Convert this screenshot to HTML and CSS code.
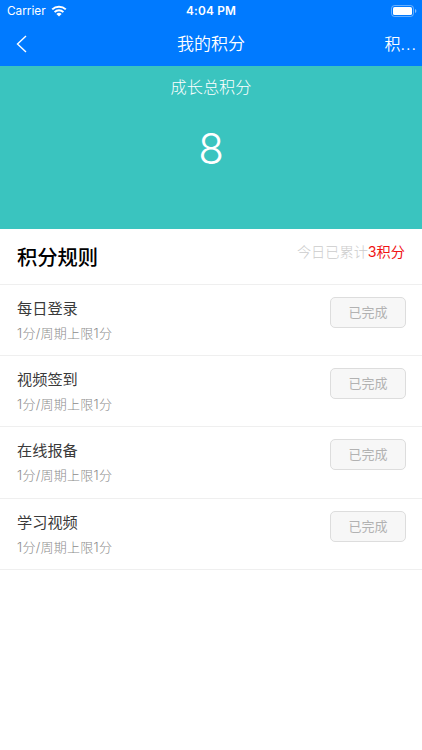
FILE: index.html
```html
<!DOCTYPE html>
<html lang="zh-CN">
<head>
    <meta charset="UTF-8">
    <meta name="viewport" content="width=device-width, initial-scale=1.0">
    <title>我的积分</title>
    <link rel="stylesheet" href="styles.css">
</head>
<body>
    <div class="status-bar">
        <div class="carrier">
            <span>Carrier</span>
            <svg class="wifi" width="16" height="12" viewBox="0 0 16 12">
                <path d="M1.2 4.4a9.8 9.8 0 0 1 13.6 0M3.6 7.1a6.3 6.3 0 0 1 8.8 0" fill="none" stroke="#fff" stroke-width="2"/>
                <path d="M8 11.6 5.4 9a3.8 3.8 0 0 1 5.2 0z" fill="#fff"/>
            </svg>
        </div>
        <div class="time">4:04 PM</div>
        <div class="battery">
            <svg width="26" height="12" viewBox="0 0 26 12">
                <rect x="0.5" y="0.5" width="22" height="11" rx="3" fill="none" stroke="#fff" stroke-opacity="0.4"/>
                <rect x="2" y="2" width="19" height="8" rx="1.6" fill="#fff"/>
                <path d="M24 4v4q1.4-.6 1.4-2T24 4z" fill="#fff" fill-opacity="0.5"/>
            </svg>
        </div>
    </div>
    <div class="nav-bar">
        <a class="back" href="#">
            <svg width="12" height="18" viewBox="0 0 12 18">
                <path d="M10 1 1.500 9l8.500 8" fill="none" stroke="#fff" stroke-width="1.4"/>
            </svg>
        </a>
        <div class="nav-title">我的积分</div>
        <div class="nav-more">积<span>...</span></div>
    </div>

    <div class="banner">
        <div class="banner-label">成长总积分</div>
        <div class="banner-score">8</div>
    </div>

    <div class="rules-header">
        <h2>积分规则</h2>
        <div class="today">今日已累计<span>3积分</span></div>
    </div>

    <ul class="rules">
        <li>
            <div class="rule">
                <div class="rule-name">每日登录</div>
                <div class="rule-desc">1分/周期上限1分</div>
            </div>
            <button disabled>已完成</button>
        </li>
        <li>
            <div class="rule">
                <div class="rule-name">视频签到</div>
                <div class="rule-desc">1分/周期上限1分</div>
            </div>
            <button disabled>已完成</button>
        </li>
        <li>
            <div class="rule">
                <div class="rule-name">在线报备</div>
                <div class="rule-desc">1分/周期上限1分</div>
            </div>
            <button disabled>已完成</button>
        </li>
        <li>
            <div class="rule">
                <div class="rule-name">学习视频</div>
                <div class="rule-desc">1分/周期上限1分</div>
            </div>
            <button disabled>已完成</button>
        </li>
    </ul>
</body>
</html>
```
FILE: styles.css
```css
* {
    box-sizing: border-box;
}
body {
    margin: 0;
    background-color: #fff;
    font-family: Inter, "Noto Sans CJK SC", sans-serif;
    color: #333;
}
/* Status bar */
.status-bar {
    display: grid;
    grid-template-columns: 1fr auto 1fr;
    align-items: center;
    height: 22px;
    padding: 0 5px 0 7px;
    background-color: #007aff;
    color: #fff;
    font-size: 11.8px;
    line-height: 22px;
}
.carrier {
    display: flex;
    align-items: center;
    gap: 5px;
}
.time {
    margin-right: 2px;
    font-weight: 600;
    letter-spacing: 0.2px;
}
.battery {
    display: flex;
    justify-content: flex-end;
}
/* Navigation bar */
.nav-bar {
    display: grid;
    grid-template-columns: 1fr auto 1fr;
    align-items: center;
    height: 44px;
    padding: 0 5px 0 16px;
    background-color: #007aff;
    color: #fff;
    font-size: 17px;
    font-weight: 350;
    line-height: 44px;
}
.back {
    display: flex;
}
.nav-title {
    margin-right: 11px;
}
.nav-more {
    font-size: 16px;
    text-align: right;
}
.nav-more span {
    letter-spacing: 1px;
}
/* Total score */
.banner {
    height: 162.5px;
    padding-top: 8px;
    background-color: #3ac4bf;
    color: #fff;
    text-align: center;
    font-weight: 300;
}
.banner-label {
    font-size: 16.2px;
    line-height: 26px;
}
.banner-score {
    margin-top: 24px;
    font-size: 42px;
    line-height: 50px;
}
/* Rules list */
.rules-header {
    display: flex;
    justify-content: space-between;
    height: 56.5px;
    padding: 12px 17px 0;
    border-bottom: 1px solid #efefef;
}
.rules-header h2 {
    margin: 1px 0 0;
    color: #000;
    font-size: 20.3px;
    font-weight: 500;
    line-height: 32px;
}
.today {
    color: #ccc;
    font-size: 14.2px;
    font-weight: 300;
    line-height: 22px;
}
.today span {
    color: #f01414;
    font-weight: 400;
}
.rules {
    margin: 0;
    padding: 0;
    list-style: none;
}
.rules li {
    display: flex;
    justify-content: space-between;
    height: 71.2px;
    padding: 12px 16px 0 17px;
    border-bottom: 1px solid #efefef;
}
.rule-name {
    color: #3a3a3a;
    font-size: 15.2px;
    line-height: 24px;
}
.rule-desc {
    color: #8c8c8c;
    font-size: 13px;
    font-weight: 300;
    letter-spacing: 0.28px;
    line-height: 24px;
}
.rules button {
    width: 76px;
    height: 31px;
    padding: 0 0 2px;
    border: 1px solid #ddd;
    border-radius: 5px;
    background-color: #f7f7f7;
    color: #b2b2b2;
    font-family: inherit;
    font-size: 13px;
}
```
